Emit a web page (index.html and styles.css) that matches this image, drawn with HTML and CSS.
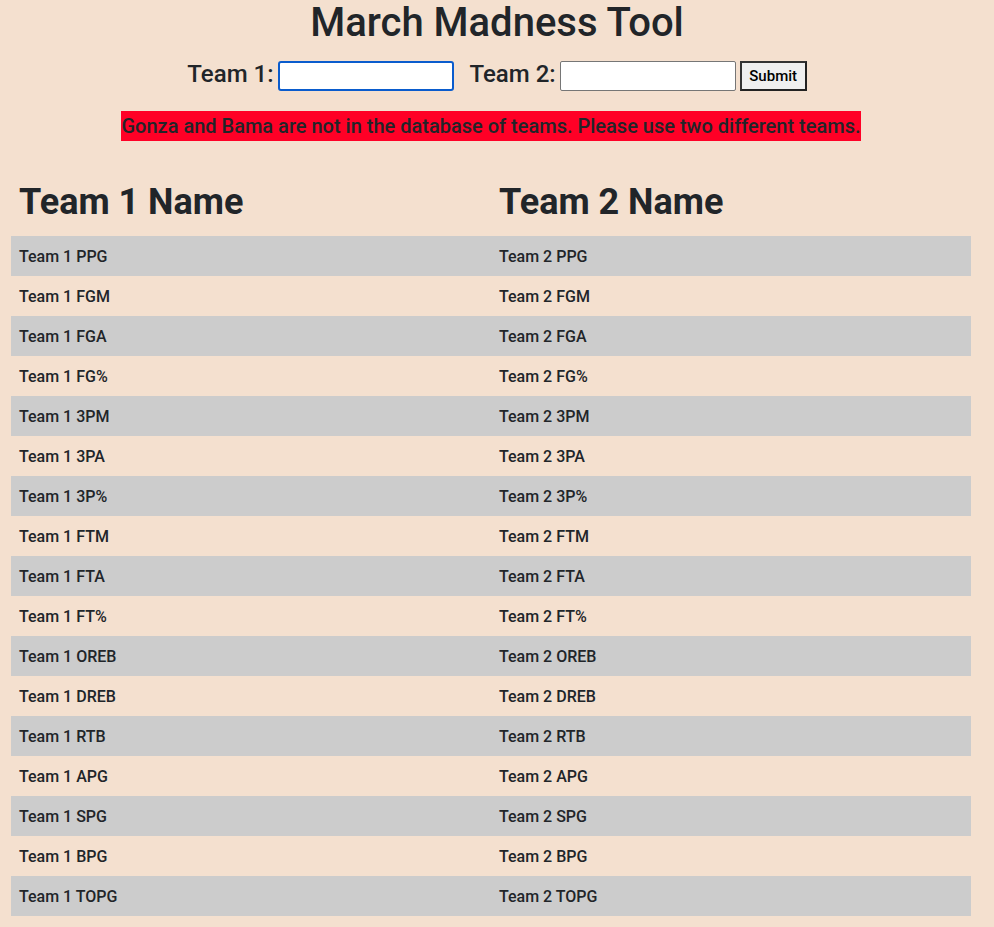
FILE: index.html
```html
<!DOCTYPE html>
<html>
<head>
<meta charset="utf-8">
<link rel="stylesheet" href="styles.css">
</head>
<body>
<div class="page">
  <h1 class="title">March Madness Tool</h1>
  <form class="team-form">
    <label class="team-label">Team 1:</label>
    <input class="team-input focused" type="text">
    <label class="team-label second">Team 2:</label>
    <input class="team-input" type="text">
    <button class="submit" type="button">Submit</button>
  </form>
  <div class="error-wrap"><span class="error">Gonza and Bama are not in the database of teams. Please use two different teams.</span></div>
  <table class="stats">
    <thead>
      <tr><th class="team-head">Team 1 Name</th><th class="team-head">Team 2 Name</th></tr>
    </thead>
    <tbody>
      <tr><td>Team 1 PPG</td><td>Team 2 PPG</td></tr>
      <tr><td>Team 1 FGM</td><td>Team 2 FGM</td></tr>
      <tr><td>Team 1 FGA</td><td>Team 2 FGA</td></tr>
      <tr><td>Team 1 FG%</td><td>Team 2 FG%</td></tr>
      <tr><td>Team 1 3PM</td><td>Team 2 3PM</td></tr>
      <tr><td>Team 1 3PA</td><td>Team 2 3PA</td></tr>
      <tr><td>Team 1 3P%</td><td>Team 2 3P%</td></tr>
      <tr><td>Team 1 FTM</td><td>Team 2 FTM</td></tr>
      <tr><td>Team 1 FTA</td><td>Team 2 FTA</td></tr>
      <tr><td>Team 1 FT%</td><td>Team 2 FT%</td></tr>
      <tr><td>Team 1 OREB</td><td>Team 2 OREB</td></tr>
      <tr><td>Team 1 DREB</td><td>Team 2 DREB</td></tr>
      <tr><td>Team 1 RTB</td><td>Team 2 RTB</td></tr>
      <tr><td>Team 1 APG</td><td>Team 2 APG</td></tr>
      <tr><td>Team 1 SPG</td><td>Team 2 SPG</td></tr>
      <tr><td>Team 1 BPG</td><td>Team 2 BPG</td></tr>
      <tr><td>Team 1 TOPG</td><td>Team 2 TOPG</td></tr>
    </tbody>
  </table>
</div>
</body>
</html>
```

FILE: styles.css
```css
html, body {
  margin: 0;
  padding: 0;
  background: #f4e0cf;
}
body {
  font-family: Roboto, "Liberation Sans", sans-serif;
  color: #212529;
}
.page {
  padding: 0 11px;
}
.title {
  margin: 0;
  text-align: center;
  font-size: 40px;
  font-weight: 500;
  line-height: 46px;
}
.team-form {
  display: flex;
  justify-content: center;
  align-items: center;
  margin-top: 15px;
  gap: 4px;
}
.team-label {
  font-size: 24px;
  font-weight: 500;
  line-height: 28px;
  position: relative;
  top: -2px;
}
.team-label.second {
  margin-left: 12px;
}
.team-input {
  box-sizing: border-box;
  width: 176px;
  height: 30px;
  margin: 0;
  border: 1px solid #767676;
  border-radius: 2px;
  background: #fff;
}
.team-input.focused {
  border: 2px solid #0a5ccd;
  border-radius: 3px;
}
.submit {
  box-sizing: border-box;
  height: 30px;
  width: 67px;
  margin: 0;
  padding: 0;
  font-family: Roboto, "Liberation Sans", sans-serif;
  font-size: 15px;
  font-weight: 500;
  color: #000;
  background: #efefef;
  border: 2px solid #333;
  border-right-color: #222;
  border-bottom-color: #222;
}
.error-wrap {
  text-align: center;
  margin-top: 20px;
  padding-right: 12px;
}
.error {
  display: inline-block;
  background: #ff0026;
  font-size: 20px;
  font-weight: 500;
  line-height: 30px;
  padding: 0;
}
.stats {
  width: 960px;
  border-collapse: collapse;
  margin-top: 20px;
  table-layout: fixed;
}
.team-head {
  text-align: left;
  font-size: 36px;
  font-weight: 700;
  padding: 20px 8px 13px;
  line-height: 42px;
}
.stats td {
  height: 40px;
  box-sizing: border-box;
  padding: 0 8px;
  font-size: 16px;
  font-weight: 500;
  vertical-align: middle;
}
.stats tbody tr:nth-child(odd) {
  background: #cccccc;
}
```
